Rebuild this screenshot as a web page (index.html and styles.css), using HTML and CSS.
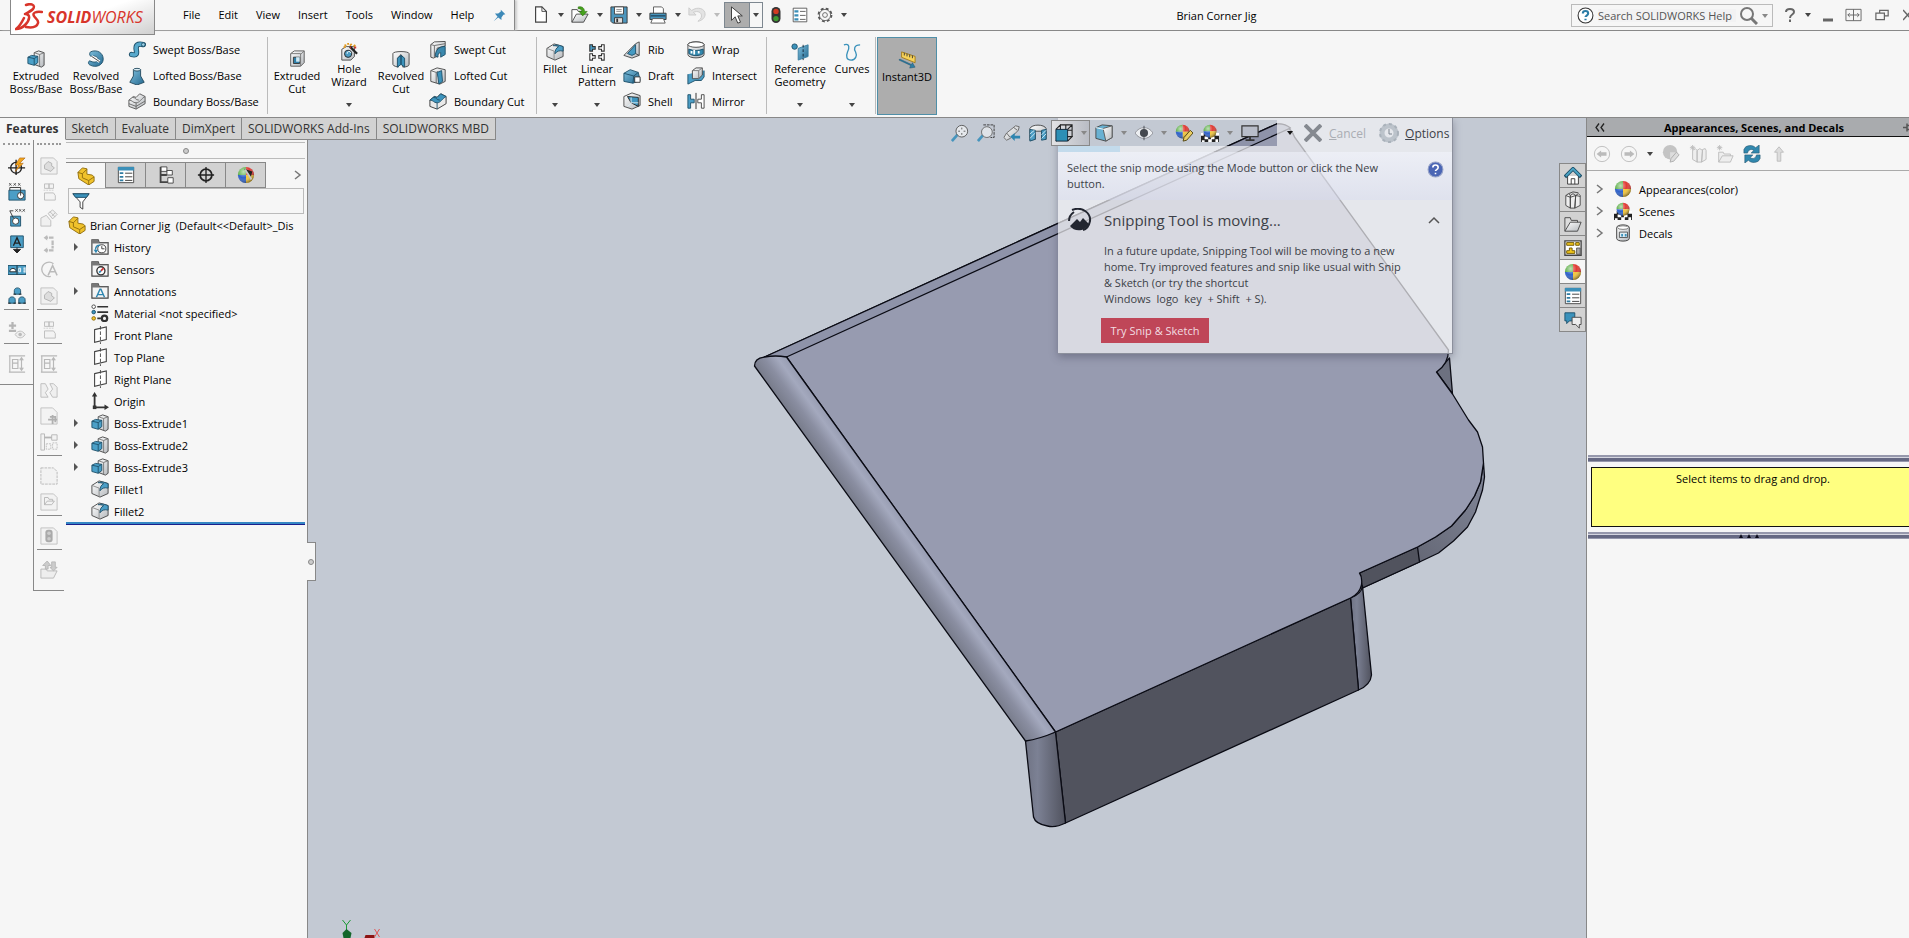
FILE: index.html
```html
<!DOCTYPE html>
<html lang="en">
<head>
    <meta charset="UTF-8">
    <meta name="viewport" content="width=device-width, initial-scale=1.0">
    <title>SOLIDWORKS - Brian Corner Jig</title>
    <link rel="stylesheet" href="styles.css">
</head>
<body>
    <!-- icon sprite -->
    <svg class="sprite" aria-hidden="true">
        <defs>
            <linearGradient id="blue" x1="0" y1="0" x2="1" y2="1"><stop offset="0" stop-color="#7fc0de"/><stop offset="1" stop-color="#24688f"/></linearGradient>
            <linearGradient id="grey" x1="0" y1="0" x2="1" y2="1"><stop offset="0" stop-color="#ffffff"/><stop offset="1" stop-color="#b5b9bd"/></linearGradient>
            <radialGradient id="shine" cx=".35" cy=".3" r=".75"><stop offset="0" stop-color="#fff" stop-opacity=".6"/><stop offset=".5" stop-color="#fff" stop-opacity="0"/><stop offset="1" stop-color="#000" stop-opacity=".5"/></radialGradient>
        </defs>
        <symbol id="caret" viewBox="0 0 6 4"><path d="M0 0h6L3 4z" fill="currentColor"/></symbol>
        <symbol id="extrude" viewBox="0 0 20 20"><path d="M8 3l5-2 6 2v14l-3 2-8-3z" fill="url(#grey)" stroke="#444"/><path d="M8 3l6 2v13M14 5l5-2" fill="none" stroke="#777"/><path d="M1 8l4-2 7 1v7l-4 3-7-2z" fill="#4ba0c8" stroke="#1d4f69"/><path d="M1 8l7 1.500 4-2.500M8 9.500V17" fill="none" stroke="#1d4f69"/></symbol>
        <symbol id="revolve" viewBox="0 0 20 20"><path d="M4 2c7-3 14 1 14 8 0 7-8 10-14 7-3-1-3-4-1-5 4 2 8 2 9-1 1-3-3-5-6-4C3 8 2 4 4 2z" fill="url(#blue)" stroke="#1d4f69"/><path d="M5 7l9 6" stroke="#fff" stroke-width="3"/><path d="M5 7l9 6" stroke="#333"/></symbol>
        <symbol id="sweep" viewBox="0 0 20 20"><path d="M4 15c8 2 5-4 5-7 0-5 4-5 8-4" fill="none" stroke="#1d4f69" stroke-width="6" stroke-linecap="round"/><path d="M4 15c8 2 5-4 5-7 0-5 4-5 8-4" fill="none" stroke="#58a9cc" stroke-width="4" stroke-linecap="round"/><circle cx="17" cy="4" r="2" fill="#9bd0e6" stroke="#1d4f69"/></symbol>
        <symbol id="loft" viewBox="0 0 20 20"><path d="M6 3h8v7l4 7-8 3-8-3 4-7z" fill="url(#blue)" stroke="#23485c"/><ellipse cx="10" cy="3" rx="4" ry="1.500" fill="#dceef5" stroke="#23485c"/></symbol>
        <symbol id="boundary" viewBox="0 0 20 20"><path d="M1 9l5-4 3 1 4-4 6 3v8l-10 6-8-3z" fill="url(#grey)" stroke="#555"/><path d="M1 9c4 0 4 3 8 3s6-5 10-7M9 12v7M5 6c4 0 3 3 7 3M1 13l8 3 10-6" fill="none" stroke="#666"/></symbol>
        <symbol id="boundcut" viewBox="0 0 20 20"><path d="M1 9l5-4 3 1 4-4 6 3v8l-10 6-8-3z" fill="#e9e9e9" stroke="#333"/><path d="M1 9l5-4 3 1 4-4 6 3c-4 2-6 7-10 7S5 9 1 9z" fill="#3d94bd" stroke="#1d4f69"/><path d="M9 12v7M5 6c4 0 3 3 7 3" fill="none" stroke="#1d4f69"/></symbol>
        <symbol id="extcut" viewBox="0 0 20 20"><path d="M3 4l4-3h11v13l-4 4H3z" fill="url(#grey)" stroke="#555"/><path d="M14 5l4-4M3 4h11v14" fill="none" stroke="#777"/><path d="M6 8h7v7H6z" fill="#2f7fa8" stroke="#333"/><path d="M9 8h4v5H9z" fill="#cfe8f3"/></symbol>
        <symbol id="wizard" viewBox="0 0 20 20"><path d="M2 7l5-3h9v11l-4 4H2z" fill="url(#grey)" stroke="#444"/><circle cx="9" cy="12" r="4" fill="#4c9cc3" stroke="#222"/><path d="M8 12a2 2 0 014-1" stroke="#fff" fill="none"/><path d="M11 4l8 8" stroke="#222" stroke-width="2.500"/><path d="M5 2l2 1M9 0v2M13 1l-2 2M17 2l-2 2M4 5l2-1" stroke="#e19a1e" stroke-width="2"/><path d="M16 5h2M11 5h1" stroke="#d5302a" stroke-width="2"/></symbol>
        <symbol id="revcut" viewBox="0 0 20 20"><path d="M1 4c0-3 18-3 18 0v12c0 3-7 3-7 3V8l-2-3-3 3v11s-6-1-6-3z" fill="url(#grey)" stroke="#444"/><path d="M6 9l4-3v10l-4 3zM10 6l4 3v10l-4-3z" fill="#3b92bb" stroke="#1d4f69"/></symbol>
        <symbol id="sweepcut" viewBox="0 0 20 20"><path d="M2 4l4-3 12-.500v5L9 8v9l-4 2-3-1z" fill="url(#grey)" stroke="#444"/><path d="M2 4l4 1 12-2M6 5v13" fill="none" stroke="#666"/><path d="M7 17c0-7 4-11 11-11v9l-5 3v-5c-3 0-3 2-3 5z" fill="#3b88ad" stroke="#1d4f69"/></symbol>
        <symbol id="loftcut" viewBox="0 0 20 20"><path d="M2 4l7-3 9 2v13l-6 3-10-3z" fill="url(#grey)" stroke="#444"/><path d="M2 4l6 2v12M8 6l2-1" fill="none" stroke="#666"/><path d="M9 6l5-2 1 12-4 3-1-7z" fill="#3b92bb" stroke="#1d4f69"/></symbol>
        <symbol id="fillet" viewBox="0 0 20 20"><path d="M1 6l8-5 10 3v11l-9 4-9-4z" fill="url(#grey)" stroke="#444"/><path d="M1 6l8 3v10" fill="none" stroke="#888"/><path d="M8 3c4-2 8 0 11 1v5c-4-1-7 0-9 3 0-4 1-6 4-8-2-1-4-1-6-1z" fill="#4b9ec6" stroke="#1d4f69"/></symbol>
        <symbol id="pattern" viewBox="0 0 20 20"><g fill="#fff" stroke="#333" stroke-width="1.200"><path d="M2 2h3v2h3v3H5v2H2z" fill="#4b9ec6"/><path d="M18 2h-3v2h-3v3h3v2h3zM2 12h3v2h3v3H5v2H2zM18 12h-3v2h-3v3h3v2h3z"/></g></symbol>
        <symbol id="rib" viewBox="0 0 20 20"><path d="M1 16L14 3l4-2v15l-8 3z" fill="url(#grey)" stroke="#444"/><path d="M5 14l9-10v10l-4 2z" fill="#459ac2" stroke="#1d4f69"/><path d="M14 14l4 2" stroke="#444"/></symbol>
        <symbol id="draft" viewBox="0 0 20 20"><path d="M1 7l7-4 9 3 2 9-8 3-10-2z" fill="url(#blue)" stroke="#1d4f69"/><path d="M1 7l11 3 5-4M12 10l-1 8" fill="none" stroke="#1d4f69"/><path d="M13 11h6v6h-6z" fill="#fff" stroke="#333"/></symbol>
        <symbol id="shell" viewBox="0 0 20 20"><path d="M1 5l9-4 9 3v11l-9 4-9-3z" fill="url(#grey)" stroke="#444"/><path d="M5 5l12 1v10l-8-4z" fill="#3f95bf" stroke="#222"/><path d="M9 6v7l-4 3M9 12h8" fill="none" stroke="#dceef5"/></symbol>
        <symbol id="wrap" viewBox="0 0 20 20"><path d="M1 4c0-4 18-4 18 0v11c0 5-18 5-18 0z" fill="url(#grey)" stroke="#444"/><ellipse cx="10" cy="4" rx="9" ry="3" fill="#fff" stroke="#444"/><path d="M2 9c5 2 11 2 16 0v5c-4 3-12 3-16 0z" fill="#3188ae" stroke="#1d4f69"/><path d="M8 10v5M13 11v3M5 11v3" stroke="#fff" stroke-width="2"/></symbol>
        <symbol id="intersect" viewBox="0 0 20 20"><path d="M1 8v11l8-4h7l3-4V4" fill="#4b9ec6" stroke="#1d4f69"/><path d="M6 4l4-3h7v8l-4 4H6z" fill="url(#grey)" stroke="#444"/><path d="M6 4h7v9M13 4l4-3" fill="none" stroke="#777"/></symbol>
        <symbol id="mirror" viewBox="0 0 20 20"><path d="M1 3h3v5h4v4H4v6H1z" fill="#4b9ec6" stroke="#1d4f69"/><path d="M19 3h-3v5h-4v4h4v6h3z" fill="#fff" stroke="#444"/><path d="M10 1v18" stroke="#222"/></symbol>
        <symbol id="refgeo" viewBox="0 0 20 20"><circle cx="4" cy="4" r="3" fill="#3b92bb" stroke="#1d4f69"/><path d="M8 6l11-4v13L8 19z" fill="url(#blue)" stroke="#3a7fa1"/><path d="M13.500 2v17" stroke="#123" stroke-dasharray="3 2"/></symbol>
        <symbol id="curves" viewBox="0 0 20 20"><path d="M1 2c7-2 6 4 4 8-2 5-1 9 4 9s7-5 5-9c-2-3-2-8 5-8" fill="none" stroke="#3b92bb" stroke-width="1.500"/></symbol>
        <symbol id="instant" viewBox="0 0 20 20"><path d="M4 1l15 5v7L4 7z" fill="#f7d35b" stroke="#a07a1a"/><path d="M7 2v3M10 3v3M13 4v3M16 5v3" stroke="#333"/><path d="M1 10l13 6-1 3 6-1-3-5-1 2-13-6z" fill="#2d7ea5" stroke="#1d4f69" stroke-width=".5"/></symbol>
        <symbol id="newdoc" viewBox="0 0 20 20"><path d="M4 1h7l5 5v12H4z" fill="#fff" stroke="#444" stroke-width="1.300"/><path d="M11 1v5h5" fill="none" stroke="#444"/></symbol>
        <symbol id="open" viewBox="0 0 20 20"><path d="M1 18V4h6l1 2h5v3" fill="#fff" stroke="#444"/><path d="M1 18l5-9h13l-5 9z" fill="url(#grey)" stroke="#444"/><path d="M8 1c5-1 7 2 7 5h3l-5 5-4-5h3c0-2-1-3-4-3z" fill="#46a31c" stroke="#25680a" stroke-width=".6"/></symbol>
        <symbol id="save" viewBox="0 0 20 20"><path d="M1 1h18v18H3l-2-2z" fill="#4d96bd" stroke="#333"/><path d="M5 1h10v8H5z" fill="#fff" stroke="#444"/><path d="M7 4h6M7 6h6" stroke="#888"/><path d="M5 13h9v6H5z" fill="#ddd" stroke="#333"/><path d="M7 14h2v4H7z" fill="#333"/></symbol>
        <symbol id="print" viewBox="0 0 20 20"><path d="M5 8V1h9l2 2v5" fill="#fff" stroke="#555"/><path d="M1 8h18v7H1z" fill="#4795bd" stroke="#333"/><path d="M2 11h16" stroke="#123"/><path d="M4 14h12l2 5H2z" fill="#fff" stroke="#555"/></symbol>
        <symbol id="undo" viewBox="0 0 20 20"><path d="M1 2v8h8L6 7c5-2 9 0 9 4 0 3-2 4-4 6 5-1 8-4 8-8 0-6-8-9-15-4z" fill="#e3e3e3" stroke="#c9c9c9"/></symbol>
        <symbol id="cursor" viewBox="0 0 20 20"><path d="M5 1v15l4-4 3 7 3-1-3-7h5z" fill="#fff" stroke="#333"/></symbol>
        <symbol id="traffic" viewBox="0 0 20 20"><rect x="5" y="1" width="10" height="18" rx="5" fill="#333"/><circle cx="10" cy="6" r="3" fill="#d33a22"/><circle cx="10" cy="14" r="3" fill="#3f9a32"/></symbol>
        <symbol id="props" viewBox="0 0 20 20"><path d="M1.500 1.500h17v17h-17z" fill="#fff" stroke="#444"/><path d="M3 4h5v3H3zM3 9h5v3H3zM3 14h5v3H3z" fill="#3b8fb8"/><path d="M10 5.500h7M10 10.500h7M10 15.500h7" stroke="#444"/></symbol>
        <symbol id="gear" viewBox="0 0 20 20"><circle cx="10" cy="10" r="8" fill="none" stroke="#555" stroke-width="2.500" stroke-dasharray="3.500 2.780"/><circle cx="10" cy="10" r="7" fill="#f6f6f6" stroke="#555"/><circle cx="10" cy="10" r="3" fill="none" stroke="#555"/></symbol>
        <symbol id="pin" viewBox="0 0 20 20"><path d="M12 1l7 7-3 1-3 4v4l-5-4-7 6 6-7-4-5h5l4-3z" fill="#3d89b8"/></symbol>
        <symbol id="ball" viewBox="0 0 20 20"><path d="M10 10L10 1a9 9 0 00-9 9z" fill="#5fb04a"/><path d="M10 10V1a9 9 0 019 9z" fill="#e03b34"/><path d="M10 10h9a9 9 0 01-9 9z" fill="#f3c63a"/><path d="M10 10v9a9 9 0 01-9-9z" fill="#2f62c9"/><circle cx="10" cy="10" r="9" fill="url(#shine)"/></symbol>
        <symbol id="scene" viewBox="0 0 20 20"><path d="M0 10h20v10H0z" fill="#222"/><path d="M0 10h3v3H0zM4 14h4v3H4zM11 14h4v3h-4zM16 10h4v3h-4zM1 18h3v2H1zM8 17h4v3H8zM16 17h3v3h-3z" fill="#fff"/><use href="#ball" x="2" y="0" width="16" height="16"/></symbol>
        <symbol id="decal" viewBox="0 0 20 20"><path d="M3 4c0-4 14-4 14 0v12c0 4-14 4-14 0z" fill="url(#grey)" stroke="#333"/><ellipse cx="10" cy="4" rx="6" ry="2" fill="#fff" stroke="#777"/><path d="M6 9h9v6H6z" fill="#dcebf2" stroke="#555"/><path d="M8 11h2v3H8zM12 11h2v3h-2z" fill="#3b92bb"/></symbol>
        <symbol id="part" viewBox="0 0 20 20"><path d="M1 6l5-5 5 1v6l6 1 2 2v5l-6 4L2 13z" fill="#f0c22c" stroke="#8d6b0d"/><path d="M1 6l5 1.500 5-5M6 7.500V12l7 3 6-4M13 15v5" fill="none" stroke="#8d6b0d"/></symbol>
        <symbol id="sheet" viewBox="0 0 20 20"><path d="M1.500 1.500h17v17h-17z" fill="#fff" stroke="#444"/><path d="M1 1h18v4H1z" fill="#3b8fb8"/><path d="M3 7h4v2H3zM3 11h4v2H3zM3 15h4v2H3z" fill="#2f7ca2"/><path d="M9 8h8M9 12h8M9 16h8" stroke="#333"/></symbol>
        <symbol id="config" viewBox="0 0 20 20"><path d="M4 1h7v5H4zM11 5h6v5h-6zM12 13h6v6h-6z" fill="#fff" stroke="#444"/><path d="M4 1v17h8M4 10h7" fill="none" stroke="#444" stroke-width="2"/></symbol>
        <symbol id="target" viewBox="0 0 20 20"><circle cx="10" cy="10" r="6.500" fill="none" stroke="#222" stroke-width="2"/><path d="M10 1v18M1 10h18" stroke="#222" stroke-width="1.500"/></symbol>
        <symbol id="display" viewBox="0 0 20 20"><use href="#ball"/><path d="M8 3l9 3-2 8z" fill="#222"/><path d="M9 4l6 9 1 2" fill="none" stroke="#c9c9c9" stroke-width="2"/></symbol>
        <symbol id="funnel" viewBox="0 0 20 20"><path d="M1 2h18l-7 9v8l-3-2v-6z" fill="#fff" stroke="#333"/><path d="M1 2h18l-3 4H4z" fill="#3b92bb" stroke="#1d4f69"/></symbol>
        <symbol id="folder" viewBox="0 0 20 20"><path d="M1 18V2h7l1 3h10v13z" fill="#f4f4f4" stroke="#444" stroke-width="1.300"/><path d="M1 2h7l1 3h10v1H1z" fill="#777"/></symbol>
        <symbol id="history" viewBox="0 0 20 20"><use href="#folder"/><circle cx="12" cy="12" r="4.500" fill="#fff" stroke="#333"/><path d="M12 9v3h3" fill="none" stroke="#333"/><path d="M3 13h5l-2.500 4z" fill="#2f86b0"/><path d="M5 13c0-3 2-5 5-5" fill="none" stroke="#2f86b0" stroke-width="1.500"/></symbol>
        <symbol id="sensor" viewBox="0 0 20 20"><use href="#folder"/><circle cx="11" cy="12" r="4.500" fill="#fff" stroke="#333" stroke-width="1.500"/><path d="M11 12l3-3" stroke="#c33" stroke-width="2"/><path d="M9 14l2-2" stroke="#2f86b0" stroke-width="2"/></symbol>
        <symbol id="annot" viewBox="0 0 20 20"><use href="#folder"/><path d="M6 17l4-9h1l4 9M8 14h6" fill="none" stroke="#2f86b0" stroke-width="1.600"/></symbol>
        <symbol id="material" viewBox="0 0 20 20"><circle cx="3" cy="3" r="2" fill="#fff" stroke="#444"/><circle cx="3" cy="9" r="2" fill="#3b92bb" stroke="#1d4f69"/><circle cx="3" cy="16" r="2" fill="#f0c22c" stroke="#8d6b0d"/><path d="M7 3h12M7 9h12M7 16h4" stroke="#333" stroke-width="1.800"/><circle cx="15" cy="16" r="3" fill="none" stroke="#333" stroke-width="2.500"/></symbol>
        <symbol id="plane" viewBox="0 0 20 20"><path d="M4 4l13-3v14L4 18z" fill="#fff" stroke="#444" stroke-width="1.200"/><path d="M10.500 0v20" stroke="#444" stroke-dasharray="4 2"/></symbol>
        <symbol id="origin" viewBox="0 0 20 20"><path d="M4 3v14h13" fill="none" stroke="#333" stroke-width="2"/><path d="M1 5l3-5 3 5zM15 14l5 3-5 3z" fill="#333"/><path d="M2 15h4v4H2z" fill="#333"/></symbol>
        <symbol id="chev" viewBox="0 0 8 10"><path d="M1 1l5 4-5 4" fill="none" stroke="#777" stroke-width="1.500"/></symbol>
        <!-- vertical toolbars -->
        <symbol id="smartdim" viewBox="0 0 20 20"><circle cx="9" cy="12" r="6" fill="none" stroke="#222" stroke-width="1.500"/><path d="M9 3v17M0 12h19" stroke="#222" stroke-width="1.500"/><path d="M19 1h-6l-5 8h4l-4 7 9-9h-4z" fill="#f2a51d" stroke="#a35a09" stroke-width=".6"/></symbol>
        <symbol id="dimloc" viewBox="0 0 20 20"><path d="M1 8h18v11H1z" fill="#4b9ec6" stroke="#1d4f69"/><circle cx="14" cy="14" r="3.500" fill="#fff" stroke="#333"/><path d="M14 14V5H2v3" fill="none" stroke="#333"/><path d="M1 0l3 3M4 0L1 3M6 0l3 3M9 0L6 3M11 0l3 3M14 0l-3 3" stroke="#333" stroke-width=".8"/></symbol>
        <symbol id="dimsize" viewBox="0 0 20 20"><path d="M3 8h11v11H3z" fill="#4b9ec6" stroke="#1d4f69"/><circle cx="8.500" cy="13.500" r="3.500" fill="#fff" stroke="#333"/><path d="M6 10L2 2h4" fill="none" stroke="#333"/><path d="M8 0l3 3M11 0L8 3M12 0l3 3M15 0l-3 3M16 0l3 3M19 0l-3 3" stroke="#333" stroke-width=".8"/></symbol>
        <symbol id="datum" viewBox="0 0 20 20"><path d="M3 1h14v13H3z" fill="#4b9ec6" stroke="#1d4f69"/><path d="M6 12l4-9 4 9M8 9h4" fill="none" stroke="#222" stroke-width="1.500"/><path d="M10 14v3M6 16h8l-4 4z" fill="#222" stroke="#222"/></symbol>
        <symbol id="geotol" viewBox="0 0 20 20"><path d="M0 5h20v10H0z" fill="#4b9ec6" stroke="#1d4f69"/><path d="M2 12c0-5 7-5 7 0zM10 5v10" fill="#fff" stroke="#222"/><path d="M12 8h2v4h-2zM17 8h2M17 10h2M17 12h2M19 7v6" fill="none" stroke="#fff"/></symbol>
        <symbol id="patfeat" viewBox="0 0 20 20"><g fill="#4b9ec6" stroke="#1d4f69"><path d="M7 8V4c0-4 7-4 7 0v4zM1 18v-4c0-4 7-4 7 0v4zM12 18v-4c0-4 7-4 7 0v4z"/></g><path d="M6 8h3M12 8h3M0 18h3M6 18h3M11 18h3M17 18h3" stroke="#222"/></symbol>
        <symbol id="showtol" viewBox="0 0 20 20"><path d="M5 1v8M1 5h8M1 11h8" stroke="#b5b5b5" stroke-width="2.500"/><path d="M8 15c3-5 8-5 11 0-3 5-8 5-11 0z" fill="#eee" stroke="#bbb"/><circle cx="13.500" cy="15" r="2" fill="#bbb"/></symbol>
        <symbol id="tolstat" viewBox="0 0 20 20"><path d="M1 1h18M1 19h18M2 1v18M5 5h6v10H5zM15 4v12M13 6l2-3 2 3M13 14l2 3 2-3M5 9h6" fill="none" stroke="#b8b8b8" stroke-width="1.300"/></symbol>
        <symbol id="offpart" viewBox="0 0 20 20"><path d="M1 1h14l4 4v14H1z" fill="#f0f0f0" stroke="#c0c0c0"/><path d="M5 9l4-4 4 2v3l3 2-4 4-7-3z" fill="#ddd" stroke="#b0b0b0"/></symbol>
        <symbol id="offmodel" viewBox="0 0 20 20"><path d="M5 1h5v5H5zM10 1h5v5h-5zM5 11h10l2 3v5H5z" fill="#f3f3f3" stroke="#bbb"/><path d="M4 8h12" stroke="#ccc" stroke-dasharray="2 1"/></symbol>
        <symbol id="offproj" viewBox="0 0 20 20"><path d="M9 5l5-4 5 5-5 5zM1 10l6-3 5 6v6H1z" fill="#f0f0f0" stroke="#bbb"/><path d="M11 3l6 6M13 8l4-4" stroke="#bbb"/></symbol>
        <symbol id="offsection" viewBox="0 0 20 20"><path d="M15 3H7M15 17H7M14 6v9" fill="none" stroke="#bbb" stroke-width="2.500" stroke-dasharray="5 1"/><path d="M8 0v6L4 3zM8 14v6l-4-3z" fill="#bbb"/></symbol>
        <symbol id="offdetail" viewBox="0 0 20 20"><path d="M15 3a8 8 0 10-3 14" fill="none" stroke="#bbb" stroke-width="1.500"/><path d="M9 16l5-11 5 11M11 12h6" fill="none" stroke="#bbb" stroke-width="1.700"/></symbol>
        <symbol id="offbroken" viewBox="0 0 20 20"><path d="M1 3h5l3 6-3 4 3 5H1zM11 3h4l4 4v11h-5l-3-5 3-4z" fill="#efefef" stroke="#bbb"/></symbol>
        <symbol id="offcrop" viewBox="0 0 20 20"><path d="M1 1h13l5 5v13H1z" fill="#f3f3f3" stroke="#c0c0c0"/><path d="M9 14h10M14 9v10M11 11h6v6" fill="none" stroke="#b0b0b0" stroke-width="2"/></symbol>
        <symbol id="offalt" viewBox="0 0 20 20"><path d="M1 1h4v18H1zM13 2h6v6h-6z" fill="#f3f3f3" stroke="#b5b5b5"/><path d="M5 5h8" stroke="#b5b5b5" stroke-width="2"/><path d="M7 12h5v6H7zM14 11h5v7h-5z" fill="none" stroke="#bbb" stroke-dasharray="2 1"/></symbol>
        <symbol id="offempty" viewBox="0 0 20 20"><path d="M1 1h14l4 4v14H1z" fill="#f2f2f2" stroke="#b5b5b5" stroke-dasharray="3 1"/></symbol>
        <symbol id="offopen" viewBox="0 0 20 20"><path d="M1 1h14l4 4v14H1z" fill="#f2f2f2" stroke="#c0c0c0"/><path d="M5 13V5h4l1 2h4v2M5 13l3-4h8l-3 4z" fill="none" stroke="#b5b5b5"/></symbol>
        <symbol id="offlight" viewBox="0 0 20 20"><path d="M1 1h14l4 4v14H1z" fill="#f2f2f2" stroke="#c0c0c0"/><rect x="6" y="3" width="8" height="14" rx="3" fill="#aaa"/><circle cx="10" cy="7" r="2" fill="#ccc"/><circle cx="10" cy="13" r="2" fill="#ccc"/></symbol>
        <symbol id="offupload" viewBox="0 0 20 20"><path d="M1 19V9h6l1 2h11l-4 8z" fill="#eee" stroke="#b5b5b5"/><path d="M6 9V5H3l5-5 4 5H9v4zM13 1v6h-2l4 4 4-4h-2V1z" fill="#ccc" stroke="#b5b5b5"/></symbol>
        <!-- heads-up view toolbar -->
        <symbol id="zoomfit" viewBox="0 0 20 20"><path d="M1 19l7-8" stroke="#4795bd" stroke-width="3"/><circle cx="12" cy="8" r="6.500" fill="#e5e8ec" stroke="#555"/><path d="M12 4v8M8 8h8" stroke="#555" stroke-dasharray="2 4 2"/></symbol>
        <symbol id="zoomarea" viewBox="0 0 20 20"><path d="M7 1h12v14h-4" fill="none" stroke="#333" stroke-dasharray="3 1"/><path d="M1 19l6-7" stroke="#4795bd" stroke-width="3"/><circle cx="11" cy="9" r="6" fill="#dfe3e8" stroke="#666"/></symbol>
        <symbol id="prevview" viewBox="0 0 20 20"><path d="M1 15l3-5 10-8 4 1-1 4-9 9-4 2z" fill="url(#grey)" stroke="#666"/><path d="M4 10l4 5M12 4l4 3" stroke="#666"/><path d="M8 14l5-4v3h6v3h-6v3z" fill="#2f86b0"/></symbol>
        <symbol id="section" viewBox="0 0 20 20"><path d="M1 5c2-5 16-5 18 0v12l-5-1V8H7v9l-6 1z" fill="url(#grey)" stroke="#444"/><path d="M1 6l6 1v10l-6 2zM14 7l5-1v11l-5 1z" fill="#4b9ec6" stroke="#1d4f69"/><path d="M1 11l5-4M1 16l6-6M14 12l5-5M14 16l5-5" stroke="#d4ecf6"/></symbol>
        <symbol id="orient" viewBox="0 0 20 20"><path d="M6 1h13v13M1 6l5-5v13l-5 5M6 14h13l-5 5M19 1l-5 5M12 1v18M6 7h13" fill="none" stroke="#222" stroke-width="1.200"/><path d="M1 6h13v13H1z" fill="#2d8fb5" stroke="#123"/></symbol>
        <symbol id="style" viewBox="0 0 20 20"><path d="M1 4l7-3 11 1v13l-7 4-11-3z" fill="#69b1d2" stroke="#444"/><path d="M9 5l10-3v13l-7 4z" fill="url(#grey)" stroke="#555"/><path d="M1 4l9 2" stroke="#fff"/></symbol>
        <symbol id="eye" viewBox="0 0 20 20"><path d="M0 10c5-8 15-8 20 0-5 8-15 8-20 0z" fill="#eceef1" stroke="#8d9097"/><circle cx="10" cy="10" r="4.500" fill="#44484f"/><path d="M10 2v16" stroke="#44484f"/></symbol>
        <symbol id="editapp" viewBox="0 0 20 20"><use href="#ball" x="0" y="0" width="17" height="17"/><path d="M9 19l1-4 7-8 3 3-7 8z" fill="#e9cd62" stroke="#4d400e"/></symbol>
        <symbol id="monitor" viewBox="0 0 20 20"><path d="M1 2h18v12H1z" fill="#b8bdc9" stroke="#333" stroke-width="1.300"/><path d="M10 14v4M5 18h10" stroke="#333" stroke-width="2"/></symbol>
        <!-- task pane -->
        <symbol id="home" viewBox="0 0 20 20"><path d="M4 10v9h12v-9" fill="#fff" stroke="#333"/><path d="M8 19v-6h4v6" fill="none" stroke="#333"/><path d="M1 11l9-9 9 9" fill="none" stroke="#1d4f69" stroke-width="4"/><path d="M2 10l8-8 8 8" fill="none" stroke="#4aa3c4" stroke-width="2"/></symbol>
        <symbol id="library" viewBox="0 0 20 20"><path d="M2 5l3-2 2 2v14l-5-3zM7 5l3-2 3 2-1 14H7zM13 5l3-2 2 2v11l-6 3z" fill="#eee" stroke="#444"/><path d="M2 5l5 2 6-2 5 1M5 3l5-2 6 1" fill="none" stroke="#444"/></symbol>
        <symbol id="explore" viewBox="0 0 20 20"><path d="M1 18V3h6l1 3h7v3" fill="#ddd" stroke="#444"/><path d="M1 18l6-10h12l-4 10z" fill="url(#grey)" stroke="#444"/></symbol>
        <symbol id="palette" viewBox="0 0 20 20"><path d="M1 2h18v16H1z" fill="#fff" stroke="#444" stroke-width="1.500"/><path d="M3 4h8v3H3zM13 4h4v3h-4zM3 13h3v-3h3v3h3v3H3z" fill="#f0c51b" stroke="#6b5500"/><path d="M14 10h4v7h-4z" fill="#aaa" stroke="#555"/></symbol>
        <symbol id="forum" viewBox="0 0 20 20"><path d="M1 2h11v9H6l-3 3v-3H1z" fill="#3b92bb" stroke="#1d4f69"/><path d="M9 7h10v8h-2v4l-4-4H9z" fill="#eee" stroke="#444"/></symbol>
        <symbol id="back" viewBox="0 0 20 20"><circle cx="10" cy="10" r="8.500" fill="#f6f6f6" stroke="#bbb"/><path d="M4 10l5-4v2h6v4H9v2z" fill="#bbb"/></symbol>
        <symbol id="offball" viewBox="0 0 20 20"><circle cx="9" cy="8" r="8" fill="#c4c4c4"/><path d="M9 8h8a8 8 0 01-8 8z" fill="#ddd"/><path d="M9 19l1-4 6-7 3 3-6 7z" fill="#ddd" stroke="#aaa"/></symbol>
        <symbol id="offlib" viewBox="0 0 20 20"><path d="M4 6l3-2 2 2v13l-5-3zM9 6l3-2 3 2-1 13H9zM15 5l3-1 1 2v10l-5 3z" fill="#eee" stroke="#bbb"/><path d="M4 0v6M1 3h6M2 1l4 4M6 1L2 5" stroke="#bbb"/></symbol>
        <symbol id="offfolder" viewBox="0 0 20 20"><path d="M3 19V8h5l1 2h7v2M3 19l4-7h12l-3 7z" fill="#eee" stroke="#bbb"/><path d="M4 0v6M1 3h6M2 1l4 4M6 1L2 5" stroke="#bbb"/></symbol>
        <symbol id="refresh" viewBox="0 0 20 20"><path d="M1 9V5l2-3c4-2 8-2 11 1l4-3v9h-9l3-3c-3-2-6-1-7 3zM19 11v4l-2 3c-4 2-8 2-11-1l-4 3v-9h9l-3 3c3 2 6 1 7-3z" fill="#3188ae" stroke="#1d4f69" stroke-width=".6"/></symbol>
        <symbol id="offup" viewBox="0 0 20 20"><path d="M10 2l5 6h-3v10H8V8H5z" fill="#ddd" stroke="#bbb"/></symbol>
    </svg>

    <div class="app">
        <header class="titlebar">
            <div class="menubar">
                <div class="logo">
                    <svg class="logo-mark" viewBox="0 0 28 28"><path d="M11 2c5-2 10 0 7 4-2 2-6 4-8 5M10 11c6 0 5 6 0 11-2 2-5 4-9 4 3-2 6-7 8-11M27 9c-6-1-10 1-8 4 1 2 5 4 4 7-1 4-6 5-12 4" fill="none" stroke="#d8352b" stroke-width="2.500" stroke-linecap="round"/></svg>
                    <span class="logo-text"><b>SOLID</b>WORKS</span>
                </div>
                <nav class="menu">
                    <a href="#">File</a><a href="#">Edit</a><a href="#">View</a><a href="#">Insert</a><a href="#">Tools</a><a href="#">Window</a><a href="#">Help</a>
                </nav>
                <svg class="pin"><use href="#pin"/></svg>
            </div>
            <div class="quickbar">
                <button title="New"><svg class="icon"><use href="#newdoc"/></svg><svg class="caret"><use href="#caret"/></svg></button>
                <button title="Open"><svg class="icon"><use href="#open"/></svg><svg class="caret"><use href="#caret"/></svg></button>
                <button title="Save"><svg class="icon"><use href="#save"/></svg><svg class="caret"><use href="#caret"/></svg></button>
                <button title="Print"><svg class="icon"><use href="#print"/></svg><svg class="caret"><use href="#caret"/></svg></button>
                <button title="Undo"><svg class="icon"><use href="#undo"/></svg><svg class="caret pale"><use href="#caret"/></svg></button>
                <button class="select" title="Select"><span class="select-icon"><svg class="icon"><use href="#cursor"/></svg></span><svg class="caret"><use href="#caret"/></svg></button>
                <button class="single" title="Rebuild"><svg class="icon"><use href="#traffic"/></svg></button>
                <button class="single" title="File Properties"><svg class="icon small"><use href="#props"/></svg></button>
                <button title="Options"><svg class="icon small"><use href="#gear"/></svg><svg class="caret"><use href="#caret"/></svg></button>
            </div>
            <div class="doc-title">Brian Corner Jig</div>
            <div class="search">
                <svg class="search-help" viewBox="0 0 16 16"><circle cx="8" cy="8" r="7" fill="#fff" stroke="#333"/><path d="M5.500 6c0-3 5-3 5 0 0 2-2.500 2-2.500 3.500M8 11v1.500" fill="none" stroke="#2b7ca6" stroke-width="2"/></svg>
                <input type="text" placeholder="Search SOLIDWORKS Help" aria-label="Search SOLIDWORKS Help">
                <svg class="search-lens" viewBox="0 0 18 18"><circle cx="7" cy="7" r="6" fill="none" stroke="#777" stroke-width="2"/><path d="M11 11l6 6" stroke="#777" stroke-width="3"/></svg>
                <svg class="caret mid"><use href="#caret"/></svg>
            </div>
            <div class="window-buttons">
                <button title="Help"><svg viewBox="0 0 10 14"><path d="M1 4c0-4 8-4 8 0 0 3-4 2-4 6M5 11.500V14" fill="none" stroke="#666" stroke-width="2"/></svg><svg class="caret"><use href="#caret"/></svg></button>
                <button title="Minimize"><svg viewBox="0 0 10 14"><path d="M0 12h10" stroke="#666" stroke-width="3"/></svg></button>
                <button title="Span displays"><svg class="wide" viewBox="0 0 18 14"><path d="M1 1h16v12H1zM9 1v12M3 7h12M5 5L3 7l2 2M13 5l2 2-2 2" fill="none" stroke="#666"/></svg></button>
                <button title="Restore"><svg class="wide" viewBox="0 0 18 14"><path d="M2 5h9v7H2zM6 5V2h9v6h-4" fill="none" stroke="#666" stroke-width="1.300"/></svg></button>
                <button title="Close"><svg viewBox="0 0 10 14"><path d="M0 2l9 10M9 2L0 12" stroke="#666" stroke-width="1.500"/></svg></button>
            </div>
        </header>

        <div class="ribbon">
            <div class="group">
                <button class="big w60"><svg class="icon"><use href="#extrude"/></svg>Extruded<br>Boss/Base</button>
                <button class="big w60"><svg class="icon"><use href="#revolve"/></svg>Revolved<br>Boss/Base</button>
                <div class="stack w140">
                    <button><svg class="icon"><use href="#sweep"/></svg>Swept Boss/Base</button>
                    <button><svg class="icon"><use href="#loft"/></svg>Lofted Boss/Base</button>
                    <button><svg class="icon"><use href="#boundary"/></svg>Boundary Boss/Base</button>
                </div>
            </div>
            <div class="group">
                <button class="big w52"><svg class="icon"><use href="#extcut"/></svg>Extruded<br>Cut</button>
                <button class="big w52 drop"><svg class="icon"><use href="#wizard"/></svg>Hole<br>Wizard<svg class="caret"><use href="#caret"/></svg></button>
                <button class="big w52"><svg class="icon"><use href="#revcut"/></svg>Revolved<br>Cut</button>
                <div class="stack w108">
                    <button><svg class="icon"><use href="#sweepcut"/></svg>Swept Cut</button>
                    <button><svg class="icon"><use href="#loftcut"/></svg>Lofted Cut</button>
                    <button><svg class="icon"><use href="#boundcut"/></svg>Boundary Cut</button>
                </div>
            </div>
            <div class="group tight">
                <button class="big w36 drop"><svg class="icon"><use href="#fillet"/></svg>Fillet<svg class="caret"><use href="#caret"/></svg></button>
                <button class="big w48 drop"><svg class="icon"><use href="#pattern"/></svg>Linear<br>Pattern<svg class="caret"><use href="#caret"/></svg></button>
                <div class="stack w64">
                    <button><svg class="icon"><use href="#rib"/></svg>Rib</button>
                    <button><svg class="icon"><use href="#draft"/></svg>Draft</button>
                    <button><svg class="icon"><use href="#shell"/></svg>Shell</button>
                </div>
                <div class="stack w80">
                    <button><svg class="icon"><use href="#wrap"/></svg>Wrap</button>
                    <button><svg class="icon"><use href="#intersect"/></svg>Intersect</button>
                    <button><svg class="icon"><use href="#mirror"/></svg>Mirror</button>
                </div>
            </div>
            <div class="group last">
                <button class="big w60 drop"><svg class="icon"><use href="#refgeo"/></svg>Reference<br>Geometry<svg class="caret"><use href="#caret"/></svg></button>
                <button class="big w44 drop"><svg class="icon"><use href="#curves"/></svg>Curves<svg class="caret"><use href="#caret"/></svg></button>
            </div>
            <button class="big w60 pressed"><svg class="icon"><use href="#instant"/></svg>Instant3D</button>
        </div>

        <div class="workspace">
            <aside class="left">
                <nav class="tabs">
                    <button class="active">Features</button><button>Sketch</button><button>Evaluate</button><button>DimXpert</button><button>SOLIDWORKS Add-Ins</button><button>SOLIDWORKS MBD</button>
                </nav>
                <div class="panels">
                    <div class="toolbar first">
                        <svg class="icon"><use href="#smartdim"/></svg>
                        <svg class="icon"><use href="#dimloc"/></svg>
                        <svg class="icon"><use href="#dimsize"/></svg>
                        <svg class="icon"><use href="#datum"/></svg>
                        <svg class="icon"><use href="#geotol"/></svg>
                        <svg class="icon"><use href="#patfeat"/></svg>
                        <hr>
                        <svg class="icon"><use href="#showtol"/></svg>
                        <hr>
                        <svg class="icon"><use href="#tolstat"/></svg>
                    </div>
                    <div class="toolbar second">
                        <svg class="icon"><use href="#offpart"/></svg>
                        <svg class="icon"><use href="#offmodel"/></svg>
                        <svg class="icon"><use href="#offproj"/></svg>
                        <svg class="icon"><use href="#offsection"/></svg>
                        <svg class="icon"><use href="#offdetail"/></svg>
                        <svg class="icon"><use href="#offpart"/></svg>
                        <hr>
                        <svg class="icon"><use href="#offmodel"/></svg>
                        <hr>
                        <svg class="icon"><use href="#tolstat"/></svg>
                        <svg class="icon"><use href="#offbroken"/></svg>
                        <svg class="icon"><use href="#offcrop"/></svg>
                        <svg class="icon"><use href="#offalt"/></svg>
                        <hr>
                        <svg class="icon"><use href="#offempty"/></svg>
                        <svg class="icon"><use href="#offopen"/></svg>
                        <hr>
                        <svg class="icon"><use href="#offlight"/></svg>
                        <hr>
                        <svg class="icon"><use href="#offupload"/></svg>
                    </div>
                    <section class="manager">
                        <div class="splitter"><i class="knob"></i></div>
                        <div class="manager-tabs">
                            <button class="active" title="FeatureManager"><svg class="icon"><use href="#part"/></svg></button>
                            <button title="PropertyManager"><svg class="icon"><use href="#sheet"/></svg></button>
                            <button title="ConfigurationManager"><svg class="icon"><use href="#config"/></svg></button>
                            <button title="DimXpertManager"><svg class="icon"><use href="#target"/></svg></button>
                            <button title="DisplayManager"><svg class="icon"><use href="#display"/></svg></button>
                            <svg class="more"><use href="#chev"/></svg>
                        </div>
                        <div class="filter"><svg class="icon"><use href="#funnel"/></svg><input type="text" aria-label="Filter tree"></div>
                        <ul class="tree">
                            <li class="root"><svg class="icon"><use href="#part"/></svg>Brian Corner Jig&nbsp; (Default&lt;&lt;Default&gt;_Dis</li>
                            <li class="parent"><svg class="icon"><use href="#history"/></svg>History</li>
                            <li><svg class="icon"><use href="#sensor"/></svg>Sensors</li>
                            <li class="parent"><svg class="icon"><use href="#annot"/></svg>Annotations</li>
                            <li><svg class="icon"><use href="#material"/></svg>Material &lt;not specified&gt;</li>
                            <li><svg class="icon"><use href="#plane"/></svg>Front Plane</li>
                            <li><svg class="icon"><use href="#plane"/></svg>Top Plane</li>
                            <li><svg class="icon"><use href="#plane"/></svg>Right Plane</li>
                            <li><svg class="icon"><use href="#origin"/></svg>Origin</li>
                            <li class="parent"><svg class="icon"><use href="#extrude"/></svg>Boss-Extrude1</li>
                            <li class="parent"><svg class="icon"><use href="#extrude"/></svg>Boss-Extrude2</li>
                            <li class="parent"><svg class="icon"><use href="#extrude"/></svg>Boss-Extrude3</li>
                            <li><svg class="icon"><use href="#fillet"/></svg>Fillet1</li>
                            <li><svg class="icon"><use href="#fillet"/></svg>Fillet2</li>
                        </ul>
                        <div class="rollback"></div>
                    </section>
                </div>
                <div class="side-handle"><i class="knob"></i></div>
            </aside>

            <main class="viewport">
                <svg class="model" viewBox="308 118 1279 820" preserveAspectRatio="xMidYMin slice">
                    <defs>
                        <linearGradient id="ridge" gradientUnits="userSpaceOnUse" x1="890" y1="553" x2="915" y2="535"><stop offset="0" stop-color="#787c8b"/><stop offset=".4" stop-color="#8a8ea1"/><stop offset=".75" stop-color="#a4a9be"/><stop offset="1" stop-color="#989db2"/></linearGradient>
                        <linearGradient id="corner" x1="0" x2="1"><stop offset="0" stop-color="#6f7384"/><stop offset=".3" stop-color="#7c8194"/><stop offset="1" stop-color="#50525e"/></linearGradient>
                        <linearGradient id="rim" x1="0" y1="1" x2="1" y2="0"><stop offset="0" stop-color="#555763"/><stop offset="1" stop-color="#83889a"/></linearGradient>
                    </defs>
                    <g stroke="#0a0b14" stroke-width="1.300" stroke-linejoin="round">
                        <path d="M1437 372L1450 358L1453 394z" fill="#6d7180"/>
                        <path d="M1360 573L1418 547L1436 537L1452 526L1466 510L1475 496L1481 482L1484 463L1485 477L1483 490L1476 512L1468 527L1454 541L1439 553L1420 562L1363 588z" fill="url(#rim)"/>
                        <path d="M1360 573L1418 547L1420 562L1363 588z" fill="#51535e"/>
                        <path d="M1351 598Q1362 594 1363 586L1372 675Q1371 685 1359 690z" fill="url(#corner)"/>
                        <path d="M1056 732L1351 598L1359 690L1066 823z" fill="#51535e"/>
                        <path d="M1026 741L1056 732L1066 823Q1056 828 1048 826Q1036 824 1034 817z" fill="url(#corner)"/>
                        <path d="M765 357L1277 124Q1290 124 1295 137L1449 350Q1449 364 1437 372L1453 394L1469 420L1478 432L1483 447L1484 463L1481 482L1475 496L1466 510L1452 526L1436 537L1418 547L1360 573Q1363 577 1362 585Q1360 594 1351 598L1056 732L787 357z" fill="#979bb0"/>
                        <path d="M765 357L1277 124Q1285 123 1291 128L787 357z" fill="#8e93a9"/>
                        <path d="M765 357Q755 358 755 366L1026 741Q1040 739 1056 732L787 357Q776 355 765 357z" fill="url(#ridge)"/>
                    </g>
                    <g class="triad" fill="none">
                        <path d="M343 920l4 5 4-5M347 925v5" stroke="#1c9a35"/>
                        <path d="M343 933l4-4 5 4-1 5h-7z" fill="#14662a"/>
                        <path d="M366 935h9v3h-10z" fill="#8c1414"/>
                        <path d="M375 929l5 8M380 929l-5 8" stroke="#e05555"/>
                    </g>
                </svg>

                <section class="snip">
                    <div class="snip-bar">
                        <svg class="caret"><use href="#caret"/></svg>
                        <svg class="snip-x" viewBox="0 0 18 18"><path d="M1 1l16 16M17 1L1 17" stroke="#858990" stroke-width="4"/></svg>
                        <button class="cancel" disabled><u>C</u>ancel</button>
                        <svg class="snip-gear" viewBox="0 0 20 20"><circle cx="10" cy="10" r="7" fill="none" stroke="#bcc3cb" stroke-width="5"/><circle cx="10" cy="10" r="9" fill="none" stroke="#a9b1ba" stroke-width="2" stroke-dasharray="3 3"/><path d="M10 6v5h3" fill="none" stroke="#7d858f"/></svg>
                        <button class="options"><u>O</u>ptions</button>
                    </div>
                    <div class="snip-hint">
                        <p>Select the snip mode using the Mode button or click the New button.</p>
                        <svg viewBox="0 0 16 16"><circle cx="8" cy="8" r="7" fill="#4b66b5" stroke="#98a4c8"/><path d="M5.500 6c0-3 5-3 5 0 0 2-2.500 2-2.500 3.500M8 11v1.500" fill="none" stroke="#fff" stroke-width="1.500"/></svg>
                    </div>
                    <div class="snip-body">
                        <svg class="snip-logo" viewBox="0 0 24 24"><path d="M4 2c10-4 19 3 18 11-1 5-3 8-7 9M1 13c0-5 2-7 5-9" fill="none" stroke="#222630" stroke-width="2"/><path d="M2 18l7-7 3 3 3-4 6 6c-4 8-15 8-19 2z" fill="#222630"/></svg>
                        <h2>Snipping Tool is moving...</h2>
                        <svg class="snip-up" viewBox="0 0 12 8"><path d="M1 7l5-5 5 5" fill="none" stroke="#555" stroke-width="1.500"/></svg>
                        <p>In a future update, Snipping Tool will be moving to a new<br>home. Try improved features and snip like usual with Snip<br>&amp; Sketch (or try the shortcut<br>Windows&nbsp; logo&nbsp; key&nbsp; + Shift&nbsp; + S).</p>
                        <button class="try">Try Snip &amp; Sketch</button>
                    </div>
                </section>

                <div class="hud">
                    <svg class="icon"><use href="#zoomfit"/></svg>
                    <svg class="icon"><use href="#zoomarea"/></svg>
                    <svg class="icon"><use href="#prevview"/></svg>
                    <svg class="icon"><use href="#section"/></svg>
                    <button class="boxed" title="View Orientation"><svg class="icon"><use href="#orient"/></svg><svg class="caret mid"><use href="#caret"/></svg></button>
                    <button title="Display Style"><svg class="icon"><use href="#style"/></svg><svg class="caret mid"><use href="#caret"/></svg></button>
                    <button title="Hide/Show Items"><svg class="icon"><use href="#eye"/></svg><svg class="caret mid"><use href="#caret"/></svg></button>
                    <svg class="icon"><use href="#editapp"/></svg>
                    <button title="Apply Scene"><svg class="icon"><use href="#scene"/></svg><svg class="caret mid"><use href="#caret"/></svg></button>
                    <svg class="icon"><use href="#monitor"/></svg>
                </div>

                <div class="task-tabs">
                    <button title="Resources"><svg class="icon"><use href="#home"/></svg></button>
                    <button title="Design Library"><svg class="icon"><use href="#library"/></svg></button>
                    <button title="File Explorer"><svg class="icon"><use href="#explore"/></svg></button>
                    <button title="View Palette"><svg class="icon"><use href="#palette"/></svg></button>
                    <button class="active" title="Appearances"><svg class="icon"><use href="#ball"/></svg></button>
                    <button title="Custom Properties"><svg class="icon"><use href="#sheet"/></svg></button>
                    <button title="Forum"><svg class="icon"><use href="#forum"/></svg></button>
                </div>
            </main>

            <aside class="taskpane">
                <div class="task-head"><svg viewBox="0 0 10 8"><path d="M4 0L1 4l3 4M9 0L6 4l3 4" fill="none" stroke="#222" stroke-width="1.300"/></svg><h2>Appearances, Scenes, and Decals</h2><svg class="task-pin" viewBox="0 0 10 8"><path d="M0 4h4M4 0v8M4 2h5M4 6h5" fill="none" stroke="#555" stroke-width="1.500"/></svg></div>
                <div class="task-tools">
                    <svg class="icon"><use href="#back"/></svg>
                    <svg class="icon flip"><use href="#back"/></svg>
                    <svg class="caret"><use href="#caret"/></svg>
                    <svg class="icon"><use href="#offball"/></svg>
                    <svg class="icon"><use href="#offlib"/></svg>
                    <svg class="icon"><use href="#offfolder"/></svg>
                    <svg class="icon"><use href="#refresh"/></svg>
                    <svg class="icon"><use href="#offup"/></svg>
                </div>
                <ul class="task-tree">
                    <li><svg class="arrow"><use href="#chev"/></svg><svg class="icon"><use href="#ball"/></svg>Appearances(color)</li>
                    <li><svg class="arrow"><use href="#chev"/></svg><svg class="icon"><use href="#scene"/></svg>Scenes</li>
                    <li><svg class="arrow"><use href="#chev"/></svg><svg class="icon"><use href="#decal"/></svg>Decals</li>
                </ul>
                <div class="bar"></div>
                <div class="dropzone">Select items to drag and drop.</div>
                <div class="bar"><svg viewBox="0 0 20 4"><path d="M0 4l2-4 2 4zM8 4l2-4 2 4zM16 4l2-4 2 4z" fill="#0a0a1a"/></svg></div>
            </aside>
        </div>
    </div>
</body>
</html>
```
FILE: styles.css
```css
* {
    box-sizing: border-box;
}
body {
    margin: 0;
    font-family: "Open Sans", "Noto Sans", sans-serif;
    font-size: 11px;
    line-height: 13px;
    color: #000;
    background: #f6f6f6;
    overflow: hidden;
}
button {
    font: inherit;
    color: inherit;
    background: none;
    border: none;
    padding: 0;
}
a {
    color: inherit;
    text-decoration: none;
}
ul, p, h2 {
    margin: 0;
    padding: 0;
    list-style: none;
}
svg {
    flex: none;
    display: block;
}
.sprite {
    position: absolute;
    width: 0;
    height: 0;
}
.icon {
    width: 18px;
    height: 18px;
}
.icon.small {
    width: 16px;
    height: 16px;
}
.caret {
    width: 6px;
    height: 4px;
    color: #444;
}
.caret.mid {
    color: #888;
}
.caret.pale {
    color: #bbb;
}
.app {
    display: flex;
    flex-direction: column;
    height: 100vh;
}

/* title bar */
.titlebar {
    display: flex;
    height: 31px;
    border-bottom: 1px solid #888;
}
.menubar {
    display: flex;
    align-items: center;
    width: 515px;
    padding: 0 8px 0 10px;
    border-right: 1px solid #888;
    box-shadow: 2px 0 2px #ccc;
}
.logo {
    display: flex;
    align-self: flex-start;
    align-items: center;
    position: relative;
    z-index: 2;
    width: 145px;
    height: 35px;
    padding: 0 4px;
    border: 1px solid #888;
    border-top: none;
    background: linear-gradient(160deg, #fff 50%, #d0d0d0);
}
.logo-mark {
    width: 28px;
    height: 28px;
}
.logo-text {
    margin-left: 4px;
    font-size: 16px;
    line-height: 36px;
    font-style: italic;
    color: #d8352b;
}
.menu {
    display: flex;
    flex: 1;
    gap: 18px;
    margin-left: 28px;
    line-height: 18px;
}
.pin {
    width: 13px;
    height: 13px;
}
.quickbar {
    display: flex;
    align-items: center;
    padding: 0 6px 0 17px;
}
.quickbar button {
    display: flex;
    align-items: center;
    width: 39px;
    gap: 8px;
}
.quickbar .single {
    width: 25px;
}
.quickbar .select {
    width: 39px;
    height: 26px;
    border: 1px solid #7d8790;
    gap: 3px;
    margin: 0 4px 0 -3px;
}
.select-icon {
    display: flex;
    align-items: center;
    width: 25px;
    height: 24px;
    padding-left: 2px;
    background: #adadad;
    border-right: 1px solid #7d8790;
}
.doc-title {
    flex: 1;
    text-align: center;
    line-height: 32px;
}
.search {
    display: flex;
    align-items: center;
    width: 202px;
    height: 23px;
    margin-top: 4px;
    padding: 0 3px 0 5px;
    border: 1px solid #bbb;
    gap: 4px;
}
.search-help {
    width: 17px;
    height: 17px;
}
.search input {
    width: 138px;
    border: none;
    padding: 0;
    font: inherit;
    background: #f2f2f3;
}
.search input::placeholder {
    color: #555;
    opacity: 1;
}
.search-lens {
    width: 18px;
    height: 18px;
}
.window-buttons {
    display: flex;
    align-items: center;
    gap: 12px;
    width: 136px;
    padding-left: 12px;
    overflow: hidden;
}
.window-buttons button {
    display: flex;
    align-items: center;
    gap: 10px;
}
.window-buttons svg:not(.caret) {
    width: 10px;
    height: 14px;
}
.window-buttons svg.wide {
    width: 17px;
}

/* ribbon */
.ribbon {
    display: flex;
    height: 87px;
    padding: 6px 0 3px 6px;
    border-bottom: 1px solid #888;
}
.group {
    display: flex;
    padding-right: 1px;
    margin-right: 3px;
    border-right: 1px solid #bbb;
}
.group.tight {
    margin-left: -3px;
}
.group.last {
    margin-right: 1px;
}
.big {
    display: flex;
    flex-direction: column;
    align-items: center;
    height: 78px;
    padding-top: 13px;
    text-align: center;
}
.big .icon {
    margin-bottom: 1px;
}
.big.drop {
    position: relative;
    padding-top: 6px;
}
.big .caret {
    position: absolute;
    bottom: 8px;
}
.pressed {
    background: #adadad;
    border: 1px solid #4f8fa8;
}
.stack {
    display: flex;
    flex-direction: column;
}
.stack button {
    display: flex;
    align-items: center;
    gap: 7px;
    height: 26px;
    padding-left: 2px;
    white-space: nowrap;
}
.w36 { width: 36px; }
.w44 { width: 44px; }
.w48 { width: 48px; }
.w52 { width: 52px; }
.w60 { width: 60px; }
.w64 { width: 64px; }
.w80 { width: 80px; }
.w108 { width: 108px; }
.w140 { width: 140px; }

/* workspace */
.workspace {
    display: grid;
    grid-template-columns: 308px 1fr 323px;
    flex: 1;
    min-height: 0;
}
.left {
    position: relative;
    z-index: 2;
    border-right: 1px solid #888;
}
.tabs {
    display: flex;
    width: max-content;
    height: 22px;
    font-size: 12px;
}
.tabs button {
    padding: 0 6px;
    background: #d2d2d2;
    border: 1px solid #888;
    border-left: none;
    border-top: none;
    color: #333;
}
.tabs .active {
    background: #f6f6f6;
    border-bottom-color: #f6f6f6;
    font-weight: bold;
}
.panels {
    display: flex;
    align-items: flex-start;
}
.toolbar {
    display: flex;
    flex-direction: column;
    align-items: center;
    gap: 8px;
    position: relative;
    padding: 17px 0 11px;
    border-bottom: 1px solid #888;
}
.toolbar::before {
    content: "";
    position: absolute;
    top: 3px;
    left: 3px;
    right: 3px;
    border-top: 2px dotted #999;
}
.toolbar hr {
    width: 25px;
    margin: -4px 0;
    border: none;
    border-top: 1px solid #888;
    height: 8px;
}
.first {
    width: 33px;
}
.second {
    width: 31px;
    border-left: 1px solid #888;
}
.manager {
    flex: 1;
    min-width: 0;
    margin: 2px 2px 0;
}
.splitter {
    display: flex;
    justify-content: center;
    align-items: center;
    height: 17px;
    border: 1px solid #bbb;
    border-left: none;
    border-right: none;
}
.knob {
    width: 6px;
    height: 6px;
    border: 1px solid #888;
    border-radius: 50%;
    background: #ccc;
}
.manager-tabs {
    display: flex;
    align-items: center;
    height: 26px;
    margin-top: 3px;
}
.manager-tabs button {
    display: flex;
    align-items: center;
    justify-content: center;
    width: 40px;
    height: 26px;
    background: #d2d2d2;
    border: 1px solid #888;
    border-left: none;
}
.manager-tabs .active {
    background: #f6f6f6;
    border-bottom: none;
}
.more {
    width: 8px;
    height: 10px;
    margin-left: 28px;
}
.filter {
    display: flex;
    align-items: center;
    height: 26px;
    margin: 0 1px 0 2px;
    padding-left: 3px;
    border: 1px solid #bbb;
}
.filter input {
    flex: 1;
    border: none;
    background: none;
    min-width: 0;
}
.tree li {
    display: flex;
    align-items: center;
    gap: 5px;
    height: 22px;
    padding-left: 25px;
    position: relative;
    white-space: nowrap;
}
.tree .root {
    padding-left: 2px;
    gap: 4px;
}
.tree .parent::before {
    content: "";
    position: absolute;
    left: 8px;
    border: 4px solid transparent;
    border-left-color: #555;
    border-right: none;
}
.rollback {
    height: 3px;
    background: #3587c4;
    border-bottom: 1px solid #1a1f8c;
}
.side-handle {
    display: flex;
    align-items: center;
    justify-content: center;
    position: absolute;
    right: -9px;
    top: 424px;
    width: 9px;
    height: 39px;
    border: 1px solid #888;
    border-left: none;
    background: #f6f6f6;
}

/* graphics area */
.viewport {
    position: relative;
    overflow: hidden;
    background: #c3c9d3;
}
.model {
    width: 100%;
    height: 100%;
}
.hud {
    display: flex;
    align-items: center;
    gap: 8px;
    position: absolute;
    left: 50%;
    top: 2px;
    height: 26px;
    margin-left: 4px;
}
.hud button {
    display: flex;
    align-items: center;
    gap: 8px;
    height: 26px;
}
.hud .boxed {
    width: 39px;
    margin-left: -4px;
    margin-right: -3px;
    padding-left: 3px;
    border: 1px solid #888;
    background: linear-gradient(90deg, #e2e2e4, #b9bcc4);
}
.task-tabs {
    position: absolute;
    right: 0;
    top: 45px;
    width: 27px;
    border: 1px solid #888;
    border-bottom: none;
}
.task-tabs button {
    display: flex;
    align-items: center;
    justify-content: center;
    width: 100%;
    height: 24px;
    background: #d2d2d2;
    border-bottom: 1px solid #888;
}
.task-tabs .active {
    background: #f6f6f6;
}

/* fading snipping tool window */
.snip {
    position: absolute;
    left: calc(50% + 111px);
    top: 0;
    width: 395px;
    height: 236px;
    color: #3c3f47;
    border-right: 1px solid #8c909c;
    border-bottom: 1px solid #8c909c;
    box-shadow: 0 3px 8px rgba(60, 60, 80, .4);
}
/* the view toolbar stays clear of the glass */
.snip::before {
    content: "";
    position: absolute;
    inset: 0;
    background: rgba(244, 244, 246, .7);
    clip-path: polygon(0 28px, 219px 28px, 219px 2px, 0 2px, 0 0, 100% 0, 100% 100%, 0 100%);
}
.snip > div {
    position: relative;
}
.snip-bar {
    display: flex;
    align-items: center;
    height: 34px;
    padding: 0 8px 4px 229px;
    background: linear-gradient(#c3dbec, #c3dbec) 0 100% / 62px 6px no-repeat;
}
.snip-bar .caret {
    color: #111;
}
.snip-x {
    width: 18px;
    height: 18px;
    margin: 0 7px 0 11px;
}
.snip-bar button {
    font-size: 12px;
}
.cancel {
    color: #aaadb3;
    margin-right: 13px;
}
.snip-gear {
    width: 20px;
    height: 20px;
    margin-right: 6px;
}
.snip-hint {
    display: flex;
    justify-content: space-between;
    height: 48px;
    padding: 8px 8px 0 9px;
    line-height: 16px;
    background: linear-gradient(rgba(244, 246, 255, .5), rgba(214, 218, 240, .4));
}
.snip-hint p {
    width: 330px;
}
.snip-hint svg {
    width: 17px;
    height: 17px;
    margin-top: 1px;
}
.snip-body {
    display: grid;
    grid-template-columns: 36px 1fr 12px;
    align-items: center;
    padding: 8px 12px 0 10px;
    line-height: 16px;
}
.snip-logo {
    width: 24px;
    height: 24px;
}
.snip-body h2 {
    font-size: 15px;
    line-height: 24px;
    font-weight: normal;
}
.snip-up {
    width: 12px;
    height: 8px;
}
.snip-body p {
    grid-column: 2 / 4;
    margin-top: 11px;
}
.try {
    grid-column: 2;
    justify-self: start;
    width: 108px;
    height: 25px;
    margin: 11px 0 0 -3px;
    background: #bf4658;
    color: #f2dde1;
}

/* task pane */
.taskpane {
    border-left: 1px solid #888;
    overflow: hidden;
}
.task-head {
    display: flex;
    align-items: center;
    justify-content: space-between;
    height: 19px;
    padding: 0 0 0 8px;
    background: #a9abae;
    border-bottom: 1px solid #111;
}
.task-head svg {
    width: 10px;
    height: 9px;
}
.task-head .task-pin {
    margin-right: -4px;
}
.task-head h2 {
    font-size: 11px;
}
.task-tools {
    display: flex;
    align-items: center;
    gap: 9px;
    height: 34px;
    padding-left: 6px;
    border-bottom: 1px solid #aaa;
}
.flip {
    transform: scaleX(-1);
}
.task-tree {
    height: 284px;
    padding-top: 7px;
}
.task-tree li {
    display: flex;
    align-items: center;
    gap: 7px;
    height: 22px;
    padding-left: 9px;
}
.arrow {
    width: 8px;
    height: 10px;
    margin-right: 3px;
}
.bar {
    height: 7px;
    margin-left: 1px;
    border: solid #9698ac;
    border-width: 2px 0 1px;
    background: linear-gradient(#d5d6e0 1px, #666983 1px);
}
.bar svg {
    width: 20px;
    height: 4px;
    margin: 0 auto;
}
.dropzone {
    height: 60px;
    margin: 5px -12px 5px 4px;
    padding: 4px 6px 0 0;
    text-align: center;
    background: #ffff80;
    border: 1px solid #111;
}
```
